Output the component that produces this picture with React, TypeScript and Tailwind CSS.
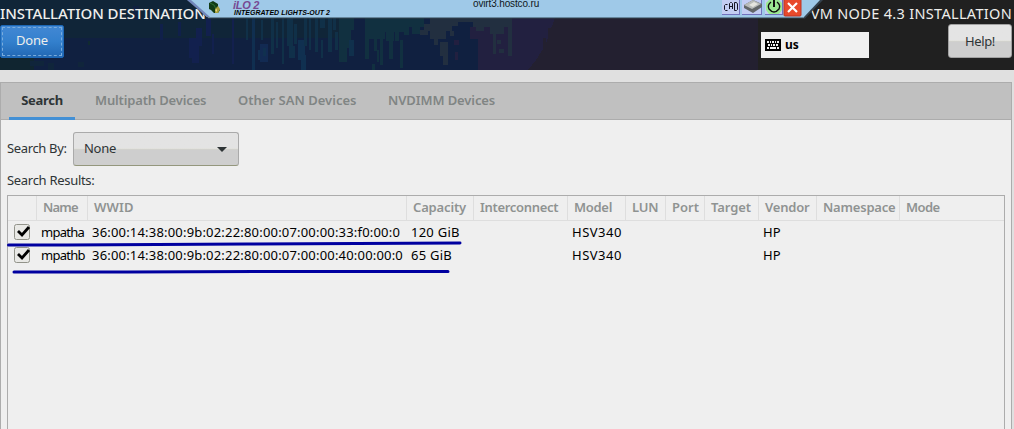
import React from "react";

type Streak = [number, number, number, number, string];

const streaks: Streak[] = [
  [133, 6, 6, 14, "#102040"], [160, 24, 3, 16, "#10204a"], [178, 22, 3, 14, "#10204a"], [189, 38, 10, 20, "#12204e"],
  [196, 28, 6, 18, "#12204e"], [192, 56, 7, 7, "#12204e"], [206, 18, 5, 18, "#12204e"], [212, 34, 2, 20, "#12204e"],
  [232, 18, 2, 46, "#13204e"], [246, 18, 2, 22, "#103048"], [252, 18, 3, 52, "#102f50"], [258, 50, 4, 10, "#102f50"],
  [260, 44, 8, 18, "#122a52"], [263, 48, 3, 8, "#10304f"], [261, 20, 2, 20, "#103048"], [271, 18, 3, 36, "#103048"],
  [276, 22, 2, 26, "#103048"], [282, 18, 2, 46, "#103048"], [287, 18, 6, 28, "#103048"], [289, 46, 6, 12, "#10304a"],
  [294, 24, 3, 20, "#103048"], [298, 40, 7, 20, "#103050"], [301, 55, 5, 15, "#103050"], [304, 18, 3, 28, "#103048"],
  [309, 18, 2, 32, "#103048"], [315, 18, 3, 34, "#103048"], [320, 18, 5, 10, "#103048"], [321, 40, 2, 18, "#103048"],
  [328, 18, 4, 34, "#103048"], [333, 18, 3, 12, "#103048"], [335, 32, 3, 18, "#103048"],
  [339, 18, 15, 12, "#113040"], [339, 30, 8, 32, "#113040"], [347, 30, 4, 18, "#113040"], [349, 40, 5, 16, "#10304c"],
  [342, 56, 5, 5, "#113040"], [365, 18, 39, 14, "#113040"], [365, 32, 20, 7, "#113040"], [365, 39, 4, 20, "#113040"],
  [374, 39, 3, 12, "#113040"], [380, 39, 3, 26, "#113040"], [386, 30, 8, 11, "#113040"], [389, 41, 4, 18, "#113040"],
  [377, 50, 2, 12, "#113040"], [395, 32, 4, 9, "#113040"], [400, 40, 3, 28, "#113040"], [404, 18, 20, 9, "#113040"],
  [404, 27, 5, 8, "#113040"], [412, 27, 8, 7, "#113040"], [372, 64, 3, 6, "#113040"],
  [430, 18, 28, 8, "#222f40"], [424, 24, 28, 7, "#222f40"], [420, 30, 8, 5, "#222f40"], [430, 31, 16, 8, "#222f40"],
  [434, 39, 4, 6, "#222f40"], [440, 42, 8, 14, "#222f40"], [443, 50, 5, 15, "#222f40"], [450, 31, 4, 5, "#222f40"],
  [458, 18, 16, 4, "#222f40"], [454, 40, 5, 5, "#221f40"], [455, 52, 3, 8, "#222040"], [470, 27, 10, 12, "#222040"],
  [473, 18, 14, 9, "#222f40"], [476, 27, 8, 4, "#222f40"], [487, 18, 25, 9, "#222f40"], [490, 27, 14, 7, "#222f40"],
  [493, 34, 3, 20, "#222f40"], [497, 40, 4, 4, "#222f40"], [508, 27, 4, 29, "#222f40"], [499, 49, 5, 4, "#222f40"],
  [543, 38, 3, 12, "#232030"], [548, 28, 3, 20, "#232030"],
  [88, 41, 2, 4, "#102a30"], [30, 61, 14, 5, "#10253b"], [48, 63, 6, 7, "#10253b"], [78, 62, 6, 5, "#10253b"],
];

function Backdrop() {
  return (
    <svg className="absolute inset-0" width="1014" height="70" shapeRendering="crispEdges" aria-hidden="true">
      <rect width="1014" height="70" fill="#102040" />
      <rect width="340" height="38" fill="#102538" />
      <rect y="56" width="34" height="14" fill="#102530" />
      <rect x="478" width="90" height="70" fill="#222040" />
      <path d="M562 0H758V70H528L536 60L546 44L552 26Z" fill="#232030" />
      <rect x="758" width="256" height="70" fill="#202020" />
      {streaks.map(([x, y, w, h, c], i) => <rect key={i} x={x} y={y} width={w} height={h} fill={c} />)}
    </svg>
  );
}

function KeyboardIcon() {
  return (
    <svg width="16" height="12" viewBox="0 0 16 12" shapeRendering="crispEdges" aria-hidden="true">
      <rect width="16" height="12" rx="1" fill="#000" />
      <path d="M2 2h2v2H2zM5 2h1v2H5zM7 2h2v2H7zM10 2h1v2h-1zM12 2h2v2h-2zM3 5h2v2H3zM6 5h1v2H6zM8 5h2v2H8zM11 5h2v2h-2zM2 8h2v2H2zM5 8h6v2H5zM12 8h2v2h-2z" fill="#f0f0f0" />
    </svg>
  );
}

function RemoteBar() {
  return (
    <div className="absolute left-[187px] top-0 h-[19px] w-[636px]">
      <svg className="absolute inset-0" width="636" height="19" aria-hidden="true">
        <path d="M0 0H636L618 18.5H21Z" fill="#34424e" />
        <path d="M3 0H633L617 17H20Z" fill="#9fc9e8" />
        <path d="M0 0H4L23 17H20Z" fill="#7186bb" />
        <path d="M21 17.5H617" stroke="#66869c" />
        <path d="M22 3l4-2 5 3v4l2 2-2 3h-4l-3-3-2-1z" fill="#123c16" />
        <path d="M23 3l4 2 2 4" stroke="#2f7031" fill="none" />
        <path d="M28 9l3-3 2 3-2 4h-3z" fill="#a49e3c" />
        <path d="M28 10l2-1v3z" fill="#e8d883" />
      </svg>
      <span className="absolute left-[46px] top-0 whitespace-nowrap font-['Liberation_Sans'] text-[11px] font-bold italic leading-[10px] tracking-[-0.3px] text-[#764a94]">iLO 2</span>
      <span className="absolute left-[47px] top-[8px] whitespace-nowrap font-['Liberation_Sans'] text-[7px] font-bold italic leading-[9px] tracking-[0.02px] text-black">INTEGRATED LIGHTS-OUT 2</span>
      <span className="absolute left-[286px] top-0 whitespace-nowrap font-['Liberation_Sans'] text-[10px] leading-[8px] tracking-[-0.14px] text-[#101820]">ovirt3.hostco.ru</span>
      <svg className="absolute left-[535px] top-0" width="80" height="17" aria-hidden="true">
        <g shapeRendering="crispEdges">
          <path d="M0 0h18v15H0zM20 0h20v15H20zM43 0h18v15H43z" fill="#7172bd" />
          <path d="M0 0h17v14H0zM20 0h19v14H20zM43 0h17v14H43z" fill="#c3cdf3" />
        </g>
        <path d="M22 5l9-5 9 4v3l-9 6-9-5z" fill="#626668" />
        <path d="M22 5l9-5 8 4-9 5z" fill="#b9bcba" />
        <path d="M27 5l5-3 4 2-5 3z" fill="#e5e5df" />
        <path d="M47 0h10l3 3v7l-3 4H47l-3-4V3z" fill="#9be992" />
        <path d="M49 2q-4 3-2 7 5 6 10 0 2-4-2-7" fill="none" stroke="#101010" strokeWidth="1.4" />
        <path d="M52 0v7" stroke="#101010" strokeWidth="2" />
        <rect x="62" y="-3" width="17" height="19" rx="1" fill="#e8492b" stroke="#bd3524" />
        <path d="M66 3l9 9M75 3l-9 9" stroke="white" strokeWidth="2.2" />
        <path d="M5.5 4.5H3.5L2.5 5.5V9.5L3.5 10.5H5.5M7.5 9V3.500L8.500 2.500H9.500L10.500 3.500V9M7.500 6.500H10.500M12.500 2.500V10.500H14.500L15.500 9.500V4L14.500 2.500Z" fill="none" stroke="#171727" />
      </svg>
    </div>
  );
}

const columns = ["", "Name", "WWID", "Capacity", "Interconnect", "Model", "LUN", "Port", "Target", "Vendor", "Namespace", "Mode"];
const headingTracking = [
  "", "tracking-[-0.8px]", "tracking-[0.1px]", "tracking-[-0.15px]", "tracking-[-0.3px]", "tracking-[-0.3px]",
  "tracking-[-0.2px]", "", "tracking-[-0.1px]", "tracking-[-0.2px]", "tracking-[-0.2px]", "tracking-[-0.55px]",
];
const rows = [
  { name: "mpatha", wwid: "36:00:14:38:00:9b:02:22:80:00:07:00:00:33:f0:00:0", capacity: "120 GiB" },
  { name: "mpathb", wwid: "36:00:14:38:00:9b:02:22:80:00:07:00:00:40:00:00:0", capacity: "65 GiB" },
];
const grid = "grid grid-cols-[29px_51px_319px_67px_94px_58px_40px_39px_54px_58px_83px_1fr]";

function Check() {
  return (
    <svg className="ml-[6px]" width="17" height="17" aria-label="Selected">
      <rect x=".5" y=".5" width="15" height="15" rx="2" fill="#e9e9e6" stroke="#92938a" />
      <path d="M4 7l4 4 7-8" fill="none" stroke="#000" strokeWidth="2.8" />
    </svg>
  );
}

export default function App() {
  return (
    <main className="relative flex h-[429px] w-[1014px] flex-col overflow-hidden bg-[#e0e0e0] font-['Noto_Sans',sans-serif] text-[13px] text-[#2e3436]">
      <header className="relative h-[70px] shrink-0 text-[#eeeeec]">
        <Backdrop />
        <div className="relative flex h-6 items-end justify-between pr-[2px] text-[15px] leading-[21px]">
          <h1 className="font-medium tracking-[-0.05px]">INSTALLATION DESTINATION</h1>
          <span className="text-[14.5px] tracking-[0.32px]">VM NODE 4.3 INSTALLATION</span>
        </div>
        <div className="relative flex items-start pr-[2px]">
          <button className="mt-px h-[33px] w-16 rounded-[2px] border border-[#1c67b5] bg-linear-to-b from-[#4288d4] via-[#3380cd] to-[#2268b4] p-px leading-[25px]">
            <span className="block h-[29px] border border-dashed border-[#79acdc] tracking-[-0.2px]">Done</span>
          </button>
          <div className="ml-[697px] mt-2 flex h-[26px] w-[108px] items-center gap-1 bg-[#f0f0f0] pl-1 text-[12px] font-bold text-black"><KeyboardIcon />us</div>
          <button className="ml-auto h-[34px] w-16 rounded-[3px] border border-[#a1a1a1] bg-linear-to-b from-[#e4e4e4] from-48% via-[#ddddca] via-50% to-[#cecece] to-52% leading-[30px] tracking-[-0.4px] text-[#2e3436]">Help!</button>
        </div>
        <RemoteBar />
      </header>

      <section className="mr-[2px] mt-3 flex grow flex-col border border-b-0 border-[#acacac] bg-[#efefef]">
        <nav className="flex h-[37px] shrink-0 border-b border-[#acacac] bg-[#c0c0c0] pl-2 font-semibold leading-[35px] text-[#808584]">
          <span className="-mb-px h-[37px] w-[66px] border-b-[3px] border-[#4390d5] text-center font-bold tracking-[-0.3px] text-[#2e3436]">Search</span>
          <span className="ml-5 w-[143px] tracking-[-0.15px]">Multipath Devices</span>
          <span className="w-[150px] tracking-[0.02px]">Other SAN Devices</span>
          <span className="tracking-[-0.1px]">NVDIMM Devices</span>
        </nav>
        <div className="flex grow flex-col px-1.5 pt-3">
          <div className="flex h-[34px] items-center">
            <label className="w-[66px] whitespace-nowrap tracking-[-0.35px]">Search By:</label>
            <button className="flex h-[34px] w-[166px] items-center justify-between rounded-[3px] border border-[#aaaaaa] border-b-[#94977d] bg-linear-to-b from-[#e3e3e3] from-48% via-[#ddddca] via-50% to-[#cecece] to-52% pl-[10px] pr-[11px] tracking-[-0.3px]">
              None
              <svg width="10" height="5" aria-hidden="true"><path d="M0 0h10L5 5z" fill="#2e3436" /></svg>
            </button>
          </div>
          <div className="h-[29px] pt-1 leading-5 tracking-[-0.3px]">Search Results:</div>
          <div className="relative grow border border-b-0 border-[#acacac]">
            <div className={`${grid} h-[25px] border-b border-[#dedede] font-semibold leading-[23px] text-[#8f9392]`}>
              {columns.map((c, i) => (
                <div key={i} className={`whitespace-nowrap pl-[6px] ${headingTracking[i]} ${i < 11 ? "border-r border-[#dedede]" : ""}`}>{c}</div>
              ))}
            </div>
            {rows.map((r) => (
              <div key={r.name} className={`${grid} h-[23px] items-center leading-[23px] text-black`}>
                <Check />
                <span className="pl-1 tracking-[-0.75px]">{r.name}</span>
                <span className="whitespace-nowrap pl-1 tracking-[0.19px]">{r.wwid}</span>
                <span className="pl-1 tracking-[0.25px]">{r.capacity}</span>
                <span />
                <span className="pl-1 tracking-[0.5px]">HSV340</span>
                <span /><span /><span />
                <span className="pl-1">HP</span>
              </div>
            ))}
            <svg className="absolute left-[-1px] top-[40px]" width="460" height="45" aria-hidden="true">
              <path d="M1.500 9H60L240 8L350 7.500L453 7" fill="none" stroke="#0000a0" strokeWidth="3" strokeLinecap="round" />
              <path d="M7 36H120L280 35.500L441 35.500" fill="none" stroke="#0000a0" strokeWidth="3" strokeLinecap="round" />
            </svg>
          </div>
        </div>
      </section>
    </main>
  );
}
